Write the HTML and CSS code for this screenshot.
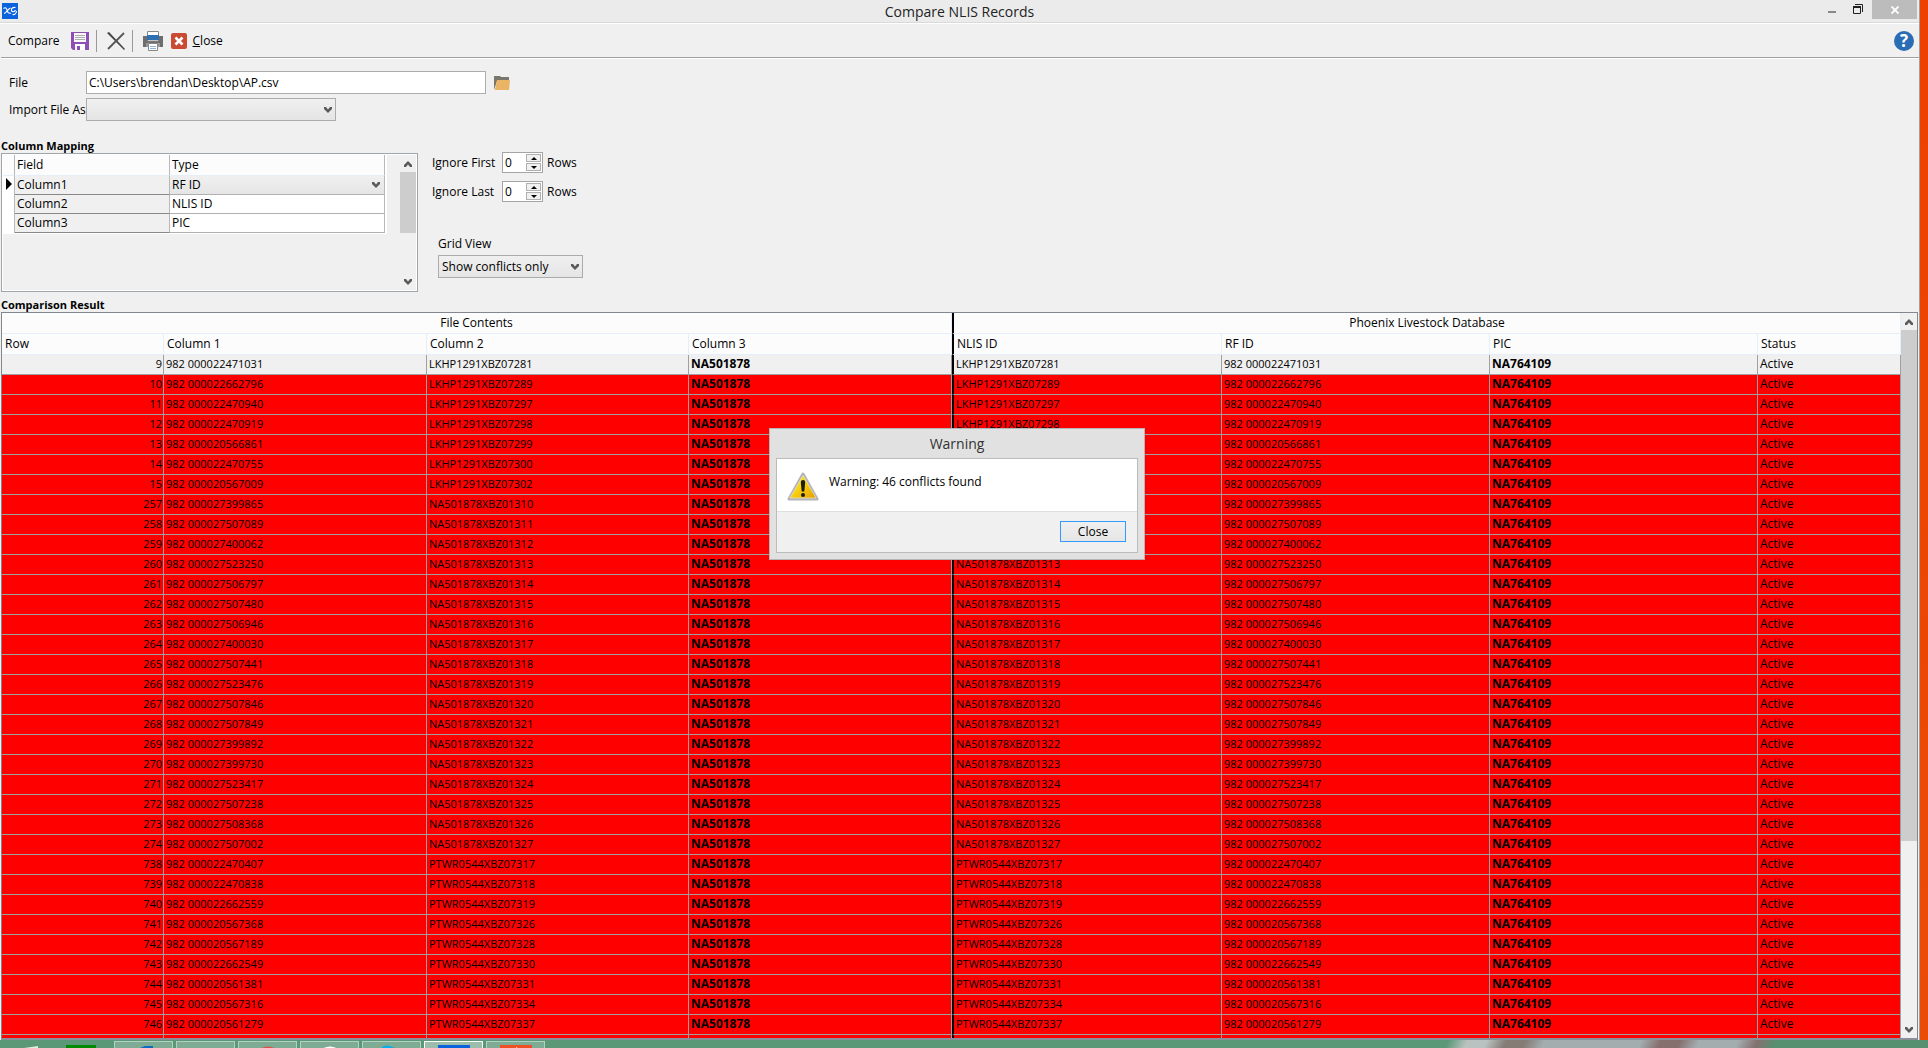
FILE: index.html
```html
<!DOCTYPE html>
<html lang="en">
<head>
<meta charset="utf-8">
<title>Compare NLIS Records</title>
<link rel="stylesheet" href="styles.css">
<script src="app.js" defer></script>
</head>
<body>
<svg class="defs" aria-hidden="true">
  <symbol id="chev-down" viewBox="0 0 8 6"><path d="M0 0h2l2 2.500L6 0h2v2L4 6 0 2z" fill="#5a5a5a"/></symbol>
  <symbol id="chev-up" viewBox="0 0 8 6"><path d="M0 6h2l2-2.500L6 6h2V4L4 0 0 4z" fill="#5a5a5a"/></symbol>
</svg>
<div class="desktop">
  <div class="window">
    <header class="titlebar">
      <svg class="app-logo" viewBox="0 0 16 16" aria-hidden="true"><rect width="16" height="16" fill="#0a63dc"/><path d="M1.500 5.500C3.500 4 4.500 5 5 7s1.500 4 4 3M8.500 5C6.500 5.500 4.500 9.500 2 10.500M13.500 4.500c-2.500-.5-4.500 1-4 3s3 1.500 4-.5M14.500 8c0 2.500-2 4-4 3.500" fill="none" stroke="#fff" stroke-width="1.100"/></svg>
      <h1 class="window-title">Compare NLIS Records</h1>
      <div class="window-buttons">
        <button class="win-btn" aria-label="Minimize"><svg width="8" height="16" viewBox="0 0 8 16"><path d="M0 11h8v2H0z" fill="#888"/></svg></button>
        <button class="win-btn" aria-label="Restore"><svg width="10" height="16" viewBox="0 0 10 16"><path d="M2 4.500h7.500V12M.5 7v6.500h7V7z" fill="none" stroke="#222"/><path d="M0 6h8v2H0z" fill="#222"/></svg></button>
        <button class="win-btn win-close" aria-label="Close window"><svg width="8" height="8" viewBox="0 0 8 8"><path d="M.5.5l7 7m0-7l-7 7" stroke="#fff" stroke-width="1.800"/></svg></button>
      </div>
    </header>
    <nav class="toolbar">
      <button class="tool">Compare</button>
      <button class="tool save" aria-label="Save"><svg width="18" height="18" viewBox="0 0 18 18"><path d="M0 0h18v18H2l-2-2z" fill="#8e4fb5"/><path d="M3 1h12v9H3z" fill="#fbf9fc"/><path d="M4 3.500h10M4 5.500h10M4 7.500h10" stroke="#aaa"/><path d="M4 12h10v6H4z" fill="#fff"/><path d="M6 14h3v4H6z" fill="#8e4fb5"/></svg></button>
      <span class="sep"></span>
      <button class="tool" aria-label="Delete"><svg width="18" height="18" viewBox="0 0 18 18"><path d="M0 1l2-1 16 17-1 1z" fill="#444"/><path d="M17 1L1 17" stroke="#555" stroke-width="1.800"/></svg></button>
      <span class="sep"></span>
      <button class="tool print" aria-label="Print"><svg width="20" height="20" viewBox="0 0 20 20"><path d="M0 5h20v11H0z" fill="#6d6d6d"/><path d="M4.500.5h11V10h-11z" fill="#fff" stroke="#888"/><path d="M4 4h12v5H4z" fill="#2f6fb3"/><path d="M3 12h14v4H3z" fill="#999"/><path d="M5.500 12.500h9v7h-9z" fill="#fff" stroke="#888"/><path d="M7 15.500h6m-6 2h6" stroke="#8bb6e0"/></svg></button>
      <button class="tool close-tool"><svg width="16" height="16" viewBox="0 0 16 16"><rect width="16" height="16" rx="2" fill="#cb4a32"/><path d="M4.500 4.500l7 7m0-7l-7 7" stroke="#fff" stroke-width="2.600"/></svg><span><u>C</u>lose</span></button>
      <button class="tool help" aria-label="Help">?</button>
    </nav>

    <form class="source">
      <label for="file">File</label>
      <div class="source-field">
        <input class="box file-input" id="file" type="text" value="C:\Users\brendan\Desktop\AP.csv">
        <button class="browse" type="button" aria-label="Browse"><svg width="16" height="14" viewBox="0 0 16 14"><path d="M0 14V0h6l1 1h8v4H3z" fill="#7a766c"/><path d="M3 4h13l-1 10H1z" fill="#e9b565"/></svg></button>
      </div>
      <label for="import-as">Import File As</label>
      <div class="combo import-combo"><select class="box" id="import-as"><option></option></select><svg class="chev"><use href="#chev-down"/></svg></div>
    </form>

    <div class="options">
      <section class="mapping">
        <h2 class="heading">Column Mapping</h2>
        <div class="mapping-box">
          <div class="mapping-main">
            <table class="mapping-table">
              <colgroup><col class="m-mark"><col class="m-field"><col class="m-type"></colgroup>
              <thead><tr><th></th><th>Field</th><th>Type</th></tr></thead>
              <tbody>
                <tr><td class="mark"><svg width="6" height="12" viewBox="0 0 6 12"><path d="M0 0l6 6-6 6z"/></svg></td><td class="field">Column1</td><td><div class="combo"><select class="type-select" aria-label="Column1 type"><option>RF ID</option><option>NLIS ID</option><option>PIC</option></select><svg class="chev"><use href="#chev-down"/></svg></div></td></tr>
                <tr><td class="mark"></td><td class="field">Column2</td><td>NLIS ID</td></tr>
                <tr><td class="mark"></td><td class="field">Column3</td><td>PIC</td></tr>
              </tbody>
            </table>
          </div>
          <div class="scroll"><svg class="arrow"><use href="#chev-up"/></svg><div class="track"><div class="thumb map-thumb"></div></div><svg class="arrow"><use href="#chev-down"/></svg></div>
        </div>
      </section>
      <section class="settings">
        <div class="ignore">
          <label for="ignore-first">Ignore First</label>
          <div class="spin"><input id="ignore-first" type="text" value="0"><div class="spin-btns"><button aria-label="More"><svg width="6" height="3"><path d="M0 3h6L3 0z"/></svg></button><button aria-label="Less"><svg width="6" height="3"><path d="M0 0h6L3 3z"/></svg></button></div></div>
          <span>Rows</span>
          <label for="ignore-last">Ignore Last</label>
          <div class="spin"><input id="ignore-last" type="text" value="0"><div class="spin-btns"><button aria-label="More"><svg width="6" height="3"><path d="M0 3h6L3 0z"/></svg></button><button aria-label="Less"><svg width="6" height="3"><path d="M0 0h6L3 3z"/></svg></button></div></div>
          <span>Rows</span>
        </div>
        <div class="view">
          <label for="grid-view">Grid View</label>
          <div class="combo"><select class="box" id="grid-view"><option>Show conflicts only</option><option>Show all</option></select><svg class="chev"><use href="#chev-down"/></svg></div>
        </div>
      </section>
    </div>

    <h2 class="heading">Comparison Result</h2>
    <section class="result">
      <div class="result-main">
        <table class="result-table">
          <colgroup><col class="c-row"><col class="c-a"><col class="c-b"><col class="c-a"><col class="c-c"><col class="c-d"><col class="c-d"><col class="c-s"></colgroup>
          <thead>
            <tr><th colspan="4" class="group">File Contents</th><th colspan="4" class="group split">Phoenix Livestock Database</th></tr>
            <tr><th>Row</th><th>Column 1</th><th>Column 2</th><th>Column 3</th><th class="split">NLIS ID</th><th>RF ID</th><th>PIC</th><th>Status</th></tr>
          </thead>
          <tbody id="rows"></tbody>
        </table>
      </div>
      <div class="scroll"><svg class="arrow"><use href="#chev-up"/></svg><div class="track"><div class="thumb result-thumb"></div></div><svg class="arrow"><use href="#chev-down"/></svg></div>
    </section>

    <dialog class="warning" open aria-labelledby="warning-title">
      <h2 id="warning-title" class="warning-title">Warning</h2>
      <div class="warning-body">
        <div class="warning-msg">
          <svg width="32" height="29" viewBox="0 0 32 29" aria-hidden="true"><defs><linearGradient id="amber" x1="0" y1="0" x2="1" y2="1"><stop offset="0" stop-color="#fff23a"/><stop offset=".5" stop-color="#f6cf10"/><stop offset="1" stop-color="#e89a00"/></linearGradient></defs><path d="M16 2L30 27H2z" fill="#bbb" stroke="#b4b4bc" stroke-width="3" stroke-linejoin="round"/><path d="M16 3.500L29 26H3z" fill="url(#amber)" stroke="#e8e0b0" stroke-width=".8"/><path d="M13.800 10q0-2 2.200-2t2.200 2l-.9 9.500h-2.600z" fill="#1c1c10"/><circle cx="16" cy="23" r="2" fill="#1c1c10"/></svg>
          <p>Warning: 46 conflicts found</p>
        </div>
        <div class="warning-foot"><button class="warning-close">Close</button></div>
      </div>
    </dialog>
  </div>

  <footer class="taskbar">
    <svg class="start" width="38" height="8"><path d="M24 8L38 6v2z" fill="#dfeee5"/></svg>
    <svg class="store" width="30" height="8"><path d="M0 5h30v3H0z" fill="#008a00"/></svg>
    <div class="task"><svg width="18" height="8"><path d="M0 8L10 4h8v4z" fill="#0b6cc0"/></svg></div>
    <div class="task"><svg width="16" height="8"><path d="M0 6h12l2 2H0z" fill="#d9b878"/></svg></div>
    <div class="task"><svg width="20" height="8"><path d="M0 8q10-7 20 0z" fill="#de5246"/></svg></div>
    <div class="task"><svg width="20" height="8"><path d="M0 8q10-7 20 0z" fill="#fff"/></svg></div>
    <div class="task"><svg width="20" height="8"><path d="M0 8V5q5-3 10 0l10 3z" fill="#00aff0"/></svg></div>
    <div class="task active"><svg width="32" height="8"><path d="M0 3h32v5H0z" fill="#0a63dc"/></svg></div>
    <div class="task"><svg width="32" height="8"><path d="M0 3h32v5H0z" fill="#f04e23"/><path d="M16 5l5 3h-5z" fill="#fff"/></svg></div>
  </footer>
</div>
</body>
</html>
```
FILE: styles.css
```css
* { box-sizing: border-box; }

body {
  margin: 0;
  font: 12px/16px "Open Sans", "Noto Sans", sans-serif;
  color: #000;
  background: #f04600;
}

h1, h2, p { margin: 0; font-weight: 400; }
button, input, select { font: inherit; color: inherit; margin: 0; padding: 0; border-radius: 0; }
button { background: none; border: 0; }
svg { display: block; }
.defs { position: absolute; width: 0; height: 0; }

.desktop {
  display: flex;
  flex-direction: column;
  height: 100vh;
  overflow: hidden;
  background: linear-gradient(#ee4000, #ea4c06);
}

.window {
  position: relative;
  display: flex;
  flex: 1;
  flex-direction: column;
  min-height: 0;
  margin-right: 8px;
  padding-left: 1px;
  background: #f0f0f0;
  border-right: 1px solid #a0a0a0;
}

/* Title bar */
.titlebar {
  display: flex;
  align-items: flex-start;
  height: 24px;
  margin-left: -1px;
  padding: 0 2px;
  background: #ebebeb;
  border-bottom: 1px solid #fff;
  box-shadow: inset 0 -1px #d9d9d9;
}
.app-logo { width: 16px; height: 16px; margin-top: 3px; }
.window-title { flex: 1; padding-left: 82px; font-size: 14px; line-height: 23px; text-align: center; color: #222; }
.window-buttons { display: flex; }
.win-btn { display: flex; align-items: flex-start; justify-content: center; width: 26px; height: 19px; }
.win-close { align-items: center; width: 45px; margin-left: 1px; background: #bcbcbc; }

/* Toolbar */
.toolbar {
  display: flex;
  align-items: center;
  height: 35px;
  padding: 0 5px 0 7px;
  border-bottom: 1px solid #fff;
  box-shadow: inset 0 -1px #a0a0a0;
}
.tool { display: flex; align-items: center; gap: 6px; }
.save { margin-left: 11px; }
.sep { width: 1px; height: 22px; margin: 0 10px 0 7px; background: #999; }
.print + .close-tool { margin-left: 8px; }
.help { justify-content: center; width: 20px; height: 20px; margin-left: auto; border-radius: 50%; background: #2a6db5; color: #fff; font-size: 17px; font-weight: 700; }

/* Source file */
.source {
  display: grid;
  grid-template-columns: 77px 1fr;
  align-items: center;
  gap: 4px 0;
  padding: 12px 0 0 8px;
}
.source-field { display: flex; align-items: center; gap: 8px; }
.box { width: 100%; height: 23px; border: 1px solid #acacac; }
.file-input { width: 400px; padding: 0 2px; background: #fff; }
select { appearance: none; outline: 0; }
select.box, .type-select { background: linear-gradient(#f0f0f0, #e5e5e5); }
.combo { display: grid; align-items: center; }
.combo > * { grid-area: 1 / 1; }
.chev { width: 8px; height: 6px; margin-right: 4px; justify-self: end; pointer-events: none; }
.import-combo { width: 250px; }

.heading { padding-top: 2px; font-size: 11px; font-weight: 700; line-height: 14px; }

/* Column mapping */
.options { display: flex; gap: 14px; padding-top: 16px; }
.mapping { width: 417px; }
.mapping-box { display: flex; height: 139px; padding: 1px; border: 1px solid #a0a5a9; box-shadow: inset 0 0 0 1px #fff; }
.mapping-main { flex: 1; }
.mapping-table { table-layout: fixed; width: 384px; border-spacing: 0; border-right: 2px solid #fff; border-bottom: 1px solid #fff; }
.m-mark { width: 12px; }
.m-field { width: 155px; }
.mapping-table th { height: 21px; padding: 0 2px; font-weight: 400; text-align: left; background: #fcfcfc; border-bottom: 1px solid #e5effa; border-right: 1px solid #b8b8b8; }
.mapping-table td { height: 19px; padding: 0 2px; background: #fff; border-bottom: 1px solid #b0b0b0; border-right: 1px solid #b8b8b8; }
.mapping-table td.field { background: #f0f0f0; border-bottom-color: #888; }
.mapping-table td.mark { padding: 2px 3px 0; vertical-align: top; border-bottom: 0; }
.mapping-table .combo { margin: 0 -2px; }
.type-select { width: 100%; height: 18px; padding: 0 2px; border: 0; }

/* Scroll bars */
.scroll { display: flex; flex-direction: column; align-items: center; width: 16px; background: #f0f0f0; }
.arrow { width: 8px; height: 6px; margin: 6px 0 5px; }
.track { flex: 1; align-self: stretch; }
.thumb { background: #cdcdcd; }
.map-thumb { height: 61px; }
.result-thumb { height: 74%; }

/* Settings */
.settings { padding-top: 15px; }
.ignore { display: grid; grid-template-columns: 70px 41px auto; gap: 8px 0; align-items: center; }
.ignore > span { padding-left: 4px; }
.spin { display: flex; height: 21px; padding: 1px; background: #fff; border: 1px solid #a5a5a8; }
.spin input { flex: 1; width: 20px; min-width: 0; padding: 0 1px; border: 0; }
.spin-btns { display: grid; gap: 1px; width: 15px; }
.spin-btns button { display: grid; place-items: center; background: #f0f0f0; border: 1px solid #b0b0b0; }
.view { display: grid; gap: 3px; width: 151px; padding: 34px 0 0 6px; }
#grid-view { padding: 0 3px; }

/* Comparison result */
.options + .heading { margin-top: 4px; }
.result { display: flex; flex: 1; min-height: 0; margin-right: 1px; border: 1px solid #828790; border-bottom: 2px solid #8a9099; }
.result-main { flex: 1; overflow: hidden; background: #fff; padding-right: 1px; }
.result-table { table-layout: fixed; width: 100%; border-spacing: 0; line-height: 18px; }
.c-row { width: 162px; }
.c-a { width: 263px; }
.c-b { width: 262px; }
.c-c { width: 270px; }
.c-d { width: 268px; }
.c-s { width: 143px; }
.result-table th { height: 21px; padding: 0 3px; font-weight: 400; line-height: 20px; text-align: left; background: #fcfcfc; border-right: 1px solid #e5effa; border-bottom: 1px solid #e5effa; }
.result-table th.group { text-align: center; }
.result-table td { height: 20px; padding: 0 2px; vertical-align: top; background: #f00; font-size: 11px; border-right: 1px solid #a0a0a0; border-bottom: 1px solid #a0a0a0; }
.result-table .current td { background: #f0f0f0; }
.result-table .num { padding: 0 1px; text-align: right; }
.result-table .pic { font-size: 12px; font-weight: 700; }
.result-table .status { font-size: 12px; }
.result-table .split { border-left: 2px solid #000; }

/* Warning dialog */
.warning { position: absolute; top: 428px; left: 769px; margin: 0; width: 376px; padding: 0 6px 6px; color: #000; background: #e1e1e1; border: 1px solid #b5b5b5; }
.warning-title { font-size: 14px; line-height: 29px; text-align: center; color: #333; }
.warning-body { border: 1px solid #bbb; background: #f0f0f0; }
.warning-msg { display: flex; gap: 10px; height: 53px; padding: 13px 10px 0; background: #fff; border-bottom: 1px solid #dfdfdf; }
.warning-msg p { line-height: 20px; }
.warning-foot { display: flex; justify-content: flex-end; padding: 9px 11px 10px; }
.warning-close { width: 66px; height: 21px; background: linear-gradient(#f0f0f0, #e5e5e5); border: 1px solid #39f; }

/* Taskbar */
.taskbar {
  display: flex;
  height: 8px;
  gap: 3px;
  background:
    linear-gradient(115deg, #5a9877 0 75%, #b9c2c0 76% 77%, #857c76 78% 79%, #a3adb0 80% 85%, #86706e 86% 87%, #a3adb0 88% 90%, #857070 91%, #569070 92% 100%);
}
.start { margin-right: 25px; }
.store { margin-right: 15px; }
.task { display: flex; justify-content: center; width: 59px; margin-top: 1px; background: #7dab93; border: 1px solid #b3d0c1; border-bottom: 0; }
.task.active { background: #9cbdac; border-color: #fff; }
```
FILE: app.js
```js
// [row, RF ID, NLIS ID] for every record whose PIC differs from the database
const records = `
9 000022471031 LKHP1291XBZ07281
10 000022662796 LKHP1291XBZ07289
11 000022470940 LKHP1291XBZ07297
12 000022470919 LKHP1291XBZ07298
13 000020566861 LKHP1291XBZ07299
14 000022470755 LKHP1291XBZ07300
15 000020567009 LKHP1291XBZ07302
257 000027399865 NA501878XBZ01310
258 000027507089 NA501878XBZ01311
259 000027400062 NA501878XBZ01312
260 000027523250 NA501878XBZ01313
261 000027506797 NA501878XBZ01314
262 000027507480 NA501878XBZ01315
263 000027506946 NA501878XBZ01316
264 000027400030 NA501878XBZ01317
265 000027507441 NA501878XBZ01318
266 000027523476 NA501878XBZ01319
267 000027507846 NA501878XBZ01320
268 000027507849 NA501878XBZ01321
269 000027399892 NA501878XBZ01322
270 000027399730 NA501878XBZ01323
271 000027523417 NA501878XBZ01324
272 000027507238 NA501878XBZ01325
273 000027508368 NA501878XBZ01326
274 000027507002 NA501878XBZ01327
738 000022470407 PTWR0544XBZ07317
739 000022470838 PTWR0544XBZ07318
740 000022662559 PTWR0544XBZ07319
741 000020567368 PTWR0544XBZ07326
742 000020567189 PTWR0544XBZ07328
743 000022662549 PTWR0544XBZ07330
744 000020561381 PTWR0544XBZ07331
745 000020567316 PTWR0544XBZ07334
746 000020561279 PTWR0544XBZ07337`.trim().split("\n").map(line => line.split(" "));

const rowHtml = ([row, rf, nlis], i) => `
  <tr${i === 0 ? ' class="current"' : ""}>
    <td class="num">${row}</td><td>982 ${rf}</td><td>${nlis}</td><td class="pic">NA501878</td>
    <td class="split">${nlis}</td><td>982 ${rf}</td><td class="pic">NA764109</td><td class="status">Active</td>
  </tr>`;

const blankRow = '<tr><td></td><td></td><td></td><td></td><td class="split"></td><td></td><td></td><td></td></tr>';

document.getElementById("rows").innerHTML = records.map(rowHtml).join("") + blankRow;
```
